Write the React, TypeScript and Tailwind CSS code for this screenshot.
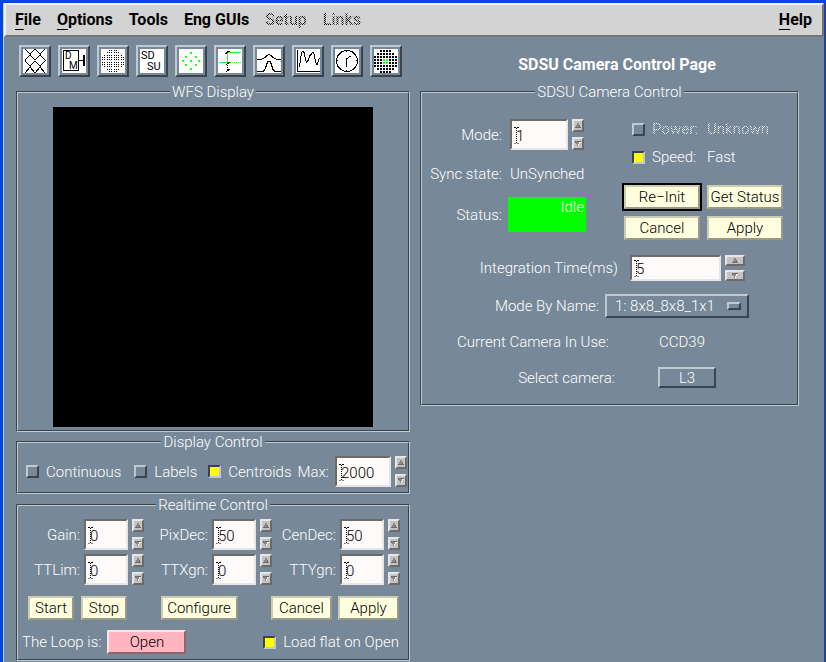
import { useState } from "react";
import type { ReactNode } from "react";
import clsx from "clsx";

const raised = "border-2 border-t-[#c0c8d0] border-l-[#c0c8d0] border-b-[#3b444c] border-r-[#3b444c]";

const Glyph = ({ children }: { children: ReactNode }) => (
  <svg
    viewBox="0 0 24 24"
    className="block size-6 bg-white font-normal"
    fill="none"
    stroke="#000"
    shapeRendering="crispEdges"
    aria-hidden="true">
    {children}
  </svg>
);

const steps = [1, 3, 6, 8, 10, 13, 15, 17, 20, 22];
const dots: [number, number][] = [];
for (const y of steps) {
  for (const x of steps) {
    if ((x - 11.5) ** 2 + (y - 11.5) ** 2 < 125) dots.push([x, y]);
  }
}

const cells: [number, number][] = [];
for (let y = 0; y < 8; y++) {
  for (let x = 0; x < 8; x++) {
    if ((x - 3.5) ** 2 + (y - 3.5) ** 2 < 16) cells.push([x, y]);
  }
}

const spots = [[11, 3], [6, 7], [16, 7], [3, 11], [11, 11], [19, 11], [6, 15], [16, 15], [11, 19]];

const tools = [
  {
    name: "Lattice",
    icon: <path d="M2 0L7 5V6L2 11V12L7 17V18L2 24M12 0L17 5M22 0L17 5V6L22 11V12L17 17V18L22 24M12 0L7 5M7 6L12 11L17 6M7 17L12 12L17 17M7 18L12 24L17 18" />,
  },
  {
    name: "Deformable mirror",
    icon: (
      <>
        <path d="M1.5 1.5h15v20h-15zM17 11.5h5" />
        <path d="M22 6v11" strokeWidth="2" />
        <text x="3" y="10" fontSize="10" fill="#000" stroke="none">D</text>
        <text x="7" y="20" fontSize="10" fill="#000" stroke="none">M</text>
      </>
    ),
  },
  {
    name: "Spot field",
    icon: dots.map(([x, y]) => <rect key={`${x}-${y}`} x={x} y={y} width="1" height="1" fill="#000" stroke="none" />),
  },
  {
    name: "SDSU",
    icon: (
      <>
        <text x="1" y="10" fontSize="11" fill="#000" stroke="none">SD</text>
        <text x="7" y="21" fontSize="11" fill="#000" stroke="none">SU</text>
      </>
    ),
  },
  {
    name: "Centroids",
    icon: spots.map(([x, y]) => <rect key={`${x}-${y}`} x={x} y={y} width="2" height="2" fill="#2f2" stroke="none" />),
  },
  {
    name: "Step",
    icon: (
      <>
        <path d="M1 13.5h9M9.5 13V3.5H23" stroke="#2f2" />
        <path d="M12 13.5h11" stroke="#2f2" strokeDasharray="1 1" />
        <path d="M9.5 16v6" strokeDasharray="1 1" />
        <path d="M7 4.5h2M8 3.5h2M9 2.5h3M8 15.5h1M9 14.5h2M10 13.5h2M8 22.5h1M9 21.5h2M10 20.5h2" />
      </>
    ),
  },
  {
    name: "Profile",
    icon: (
      <path d="M0 10.5h4l4-2 2-2 2-1 2 1 2 2 4 2h4M0 22.5h6l2-2 2-6 1-2h2l1 2 2 6 2 2h6" />
    ),
  },
  {
    name: "Trace",
    icon: <path d="M1.5 1v21.5H24M3.5 18l1-7 1-7 1-2h1l1 3 1 6 1 2 2-2 1-4 2-2 1-2h1l1 4 1 6 1 2h1l1-4 1-2h1" />,
  },
  {
    name: "Clock",
    icon: (
      <>
        <circle cx="12" cy="12" r="10.5" />
        <path d="M11.5 18v-8l4-3M11.5 1v2M11.5 21v2M1 11.5h2M21 11.5h2" />
      </>
    ),
  },
  {
    name: "Aperture",
    icon: cells.map(([x, y]) => {
      const inner = (x === 3 || x === 4) && (y === 3 || y === 4);
      return <rect key={`${x}-${y}`} x={x * 3} y={y * 3 + 1} width="2" height="2" fill={inner ? "#2f2" : "#000"} stroke="none" />;
    }),
  },
];

const Frame = ({ title, className, children }: { title: string; className?: string; children: ReactNode }) => (
  <section
    className={clsx(
      "border border-t-[#3b444c] border-l-[#3b444c] border-b-[#c0c8d0] border-r-[#c0c8d0]",
      className
    )}>
    <div className="border border-t-[#c0c8d0] border-l-[#c0c8d0] border-b-[#3b444c] border-r-[#3b444c]">
      <h2 className="mx-auto -mt-2.5 w-fit bg-[#778899] px-0.5">{title}</h2>
      {children}
    </div>
  </section>
);

const Caret = () => (
  <svg viewBox="0 0 5 17" className="absolute top-1/2 left-1 h-[17px] w-[5px] -translate-y-1/2" stroke="#000" shapeRendering="crispEdges" aria-hidden="true">
    <path d="M2.5 1v15" strokeDasharray="1 1" />
    <path d="M0 .5h2M3 .5h2M0 16.5h2M3 16.5h2" />
  </svg>
);

const Spinner = ({ label, onStep, wide }: { label: string; onStep: (n: number) => void; wide?: boolean }) => (
  <div className={clsx("flex flex-col", wide ? "gap-1" : "gap-[5px]")}>
    {[1, -1].map((n) => (
      <button
        key={n}
        aria-label={`${label} ${n > 0 ? "up" : "down"}`}
        onClick={() => onStep(n)}
        className={clsx(
          "flex items-center justify-center border-2 border-t-[#e6e6e6] border-l-[#e6e6e6] border-b-[#6e6a6a] border-r-[#6e6a6a] bg-[#c3c3c3]",
          wide ? "h-[11px] w-5" : "h-[13px] w-3"
        )}>
        <svg viewBox="0 0 6 5" className="h-[5px] w-1.5" shapeRendering="crispEdges" aria-hidden="true">
          {n > 0 ? (
            <>
              <path d="M3 0h1v2h1v2h1v1H0V4h1V2h1V0z" fill="#8c8888" />
              <path d="M4 0v2h1v2h1v1H0V4h4z" fill="#6e6a6a" />
            </>
          ) : (
            <>
              <path d="M0 0h6v1H5v2H4v2H2V3H1V1H0z" fill="#8c8888" />
              <path d="M0 0h6v1H1v1H0z" fill="#6e6a6a" />
              <path d="M5 1h1v1H5v1H4v2H3V3h1V1z" fill="#eee" />
            </>
          )}
        </svg>
      </button>
    ))}
  </div>
);

type NumberBoxProps = { id: string; label: string; start: number; box: string; labelClass?: string; wide?: boolean };

const NumberBox = ({ id, label, start, box, labelClass, wide }: NumberBoxProps) => {
  const [value, setValue] = useState(String(start));

  return (
    <div className="flex items-center">
      <label htmlFor={id} className={clsx("text-right whitespace-nowrap", labelClass)}>
        {label}
      </label>
      <div className="relative mr-1">
        <input
          id={id}
          value={value}
          onChange={(e) => setValue(e.target.value)}
          className={clsx(
            "block border-2 border-t-[#6e6a6a] border-l-[#6e6a6a] border-b-[#e6e6e6] border-r-[#e6e6e6] bg-[#fffafa] pt-0.5 pl-1 text-black outline-none",
            wide ? "h-[26px]" : "h-[31px]",
            box
          )}
        />
        <Caret />
      </div>
      <Spinner label={label} wide={wide} onStep={(n) => setValue(String(Number(value) + n))} />
    </div>
  );
};

type CheckProps = { label: string; on?: boolean; disabled?: boolean; className?: string };

const Check = ({ label, on, disabled, className }: CheckProps) => (
  <label className={clsx("flex items-center gap-[7px] whitespace-nowrap", className)}>
    <input
      type="checkbox"
      defaultChecked={on}
      disabled={disabled}
      className="size-[13px] shrink-0 appearance-none border-2 border-t-[#c0c8d0] border-l-[#c0c8d0] border-b-[#3b444c] border-r-[#3b444c] checked:border-t-[#3b444c] checked:border-l-[#3b444c] checked:border-b-[#c0c8d0] checked:border-r-[#c0c8d0] checked:bg-[#ffff00]"
    />
    <span
      className={clsx(
        disabled &&
          "bg-[repeating-conic-gradient(#fff_0_25%,transparent_0_50%)] bg-[length:2px_2px] bg-clip-text font-normal text-transparent"
      )}>
      {label}
    </span>
  </label>
);

const PushButton = ({ children, className }: { children: ReactNode; className?: string }) => (
  <button
    className={clsx(
      "h-6 border-2 border-t-[#ccccb3] border-l-[#ccccb3] border-b-[#99998a] border-r-[#99998a] bg-[#ffffe0] whitespace-nowrap text-black",
      className
    )}>
    {children}
  </button>
);

const MenuBar = () => (
  <nav className="flex h-[34px] items-center gap-4 border-2 border-t-[#f2f2f2] border-l-[#f2f2f2] border-b-[#757575] border-r-[#757575] bg-[#d3d3d3] pr-2.5 pl-[9px] text-base font-bold text-black">
    <button><span className="underline underline-offset-4">F</span>ile</button>
    <button><span className="underline underline-offset-4">O</span>ptions</button>
    <button>Tools</button>
    <button>Eng GUIs</button>
    {["Setup", "Links"].map((item) => (
      <button
        key={item}
        disabled
        className="bg-[repeating-conic-gradient(#000_0_25%,transparent_0_50%)] bg-[length:2px_2px] bg-clip-text font-medium text-transparent">
        {item}
      </button>
    ))}
    <button className="ml-auto"><span className="underline underline-offset-4">H</span>elp</button>
  </nav>
);

const LoopPanel = () => (
  <Frame title="Realtime Control" className="mt-[10px]">
    <div className="mt-[5px] mr-2 -ml-0.5 grid grid-cols-3 justify-items-end gap-y-1">
      <NumberBox id="gain" label="Gain:" start={0} box="w-11" labelClass="mr-1" />
      <NumberBox id="pixdec" label="PixDec:" start={50} box="w-11" labelClass="mr-1" />
      <NumberBox id="cendec" label="CenDec:" start={50} box="w-11" labelClass="mr-1" />
      <NumberBox id="ttlim" label="TTLim:" start={0} box="w-11" labelClass="mr-1" />
      <NumberBox id="ttxgn" label="TTXgn:" start={0} box="w-11" labelClass="mr-1" />
      <NumberBox id="ttygn" label="TTYgn:" start={0} box="w-11" labelClass="mr-1" />
    </div>
    <div className="mt-[11px] flex justify-between pr-[9px] pl-2.5">
      <div className="flex gap-[7px]">
        <PushButton className="w-[46px]">Start</PushButton>
        <PushButton className="w-[46px]">Stop</PushButton>
      </div>
      <PushButton className="w-[77px]">Configure</PushButton>
      <div className="flex gap-1.5">
        <PushButton className="w-[61px]">Cancel</PushButton>
        <PushButton className="w-[61px]">Apply</PushButton>
      </div>
    </div>
    <div className="mt-2.5 mb-[5px] flex items-center justify-between pr-[9px] pl-1">
      <div className="flex items-center gap-1.5">
        <span>The Loop is:</span>
        <button className="h-6 w-[79px] border-2 border-t-[#ffe2e6] border-l-[#ffe2e6] border-b-[#8f666c] border-r-[#8f666c] bg-[#ffb6c1] text-black">
          Open
        </button>
      </div>
      <Check label="Load flat on Open" on />
    </div>
  </Frame>
);

const CameraPanel = () => (
  <Frame title="SDSU Camera Control" className="mt-[17px] mr-[15px]">
    <div className="mt-[18px] flex">
      <div>
        <NumberBox id="mode" label="Mode:" start={1} box="w-[58px]" labelClass="w-20 mr-2" />
        <div className="mt-[15px] flex">
          <span className="mr-2 w-20 text-right">Sync state:</span>
          <span>UnSynched</span>
        </div>
        <div className="mt-[14px] flex items-center">
          <span className="mr-1.5 w-20 text-right">Status:</span>
          <div className="h-[35px] w-[78px] bg-[#00ff00] pt-px pr-0.5 text-right">Idle</div>
        </div>
      </div>
      <div className="ml-9">
        <div className="mt-px ml-2.5 grid grid-cols-[75px_auto] gap-y-2.5">
          <Check label="Power:" disabled />
          <span className="bg-[repeating-conic-gradient(#fff_0_25%,transparent_0_50%)] bg-[length:2px_2px] bg-clip-text font-normal text-transparent">
            Unknown
          </span>
          <Check label="Speed:" on />
          <span>Fast</span>
        </div>
        <div className="mt-[17px] grid grid-cols-[80px_76px] gap-x-[5px] gap-y-[5px]">
          <div className="border-2 border-black">
            <PushButton className="w-full">Re−Init</PushButton>
          </div>
          <PushButton className="self-center">Get Status</PushButton>
          <PushButton className="mx-0.5">Cancel</PushButton>
          <PushButton>Apply</PushButton>
        </div>
      </div>
    </div>
    <div className="mt-[15px]">
      <NumberBox id="integration" label="Integration Time(ms)" start={5} box="w-[91px]" labelClass="w-[196px] mr-3" wide />
    </div>
    <div className="mt-[13px] flex items-center">
      <label htmlFor="mode-name" className="mr-1.5 w-[177px] text-right">Mode By Name:</label>
      <div className="relative">
        <select id="mode-name" className={clsx("block h-6 w-36 appearance-none bg-[#778899] pl-2 text-white outline-none", raised)}>
          <option>1: 8x8_8x8_1x1</option>
        </select>
        <span className={clsx("pointer-events-none absolute top-2 right-2 h-2 w-3.5", raised)} />
      </div>
    </div>
    <div className="mt-[15px] flex">
      <span className="mr-[50px] w-[187px] text-right">Current Camera In Use:</span>
      <span>CCD39</span>
    </div>
    <div className="mt-4 mb-4 flex items-center">
      <span className="mr-[43px] w-[193px] text-right">Select camera:</span>
      <button className={clsx("flex h-[21px] w-[58px] items-center justify-center", raised)}>L3</button>
    </div>
  </Frame>
);

const App = () => {
  return (
    <div className="min-h-screen border-t-3 border-r border-l-3 border-[#0046e0] bg-[#778899] font-[Roboto,'Liberation_Sans',sans-serif] text-[15px] leading-[18px] text-white">
      <div className="min-h-[calc(100vh-3px)] border-r border-l border-r-[#3b444c] border-l-[#c0c8d0]">
        <MenuBar />
        <main className="grid grid-cols-2 gap-x-[10px] pt-2 pr-2.5 pl-3 font-light">
          <div>
            <div className="flex gap-[7px] pl-[3px]">
              {tools.map((tool) => (
                <button key={tool.name} aria-label={tool.name} className={clsx("p-0.5", raised)}>
                  <Glyph>{tool.icon}</Glyph>
                </button>
              ))}
            </div>
            <Frame title="WFS Display" className="mt-[14px]">
              <div className="mx-auto mt-1.5 mb-[3px] aspect-square max-w-80 bg-black" />
            </Frame>
            <Frame title="Display Control" className="mt-[9px]">
              <div className="mt-[5px] mb-[5px] flex items-center pr-px pl-2">
                <Check label="Continuous" />
                <Check label="Labels" className="ml-[13px]" />
                <Check label="Centroids" on className="mr-auto ml-[11px]" />
                <NumberBox id="max" label="Max:" start={2000} box="w-14" labelClass="mr-1.5" />
              </div>
            </Frame>
            <LoopPanel />
          </div>
          <div>
            <h1 className="mt-[11px] text-center text-base leading-[18px] font-bold">SDSU Camera Control Page</h1>
            <CameraPanel />
          </div>
        </main>
      </div>
    </div>
  );
};

export default App;
